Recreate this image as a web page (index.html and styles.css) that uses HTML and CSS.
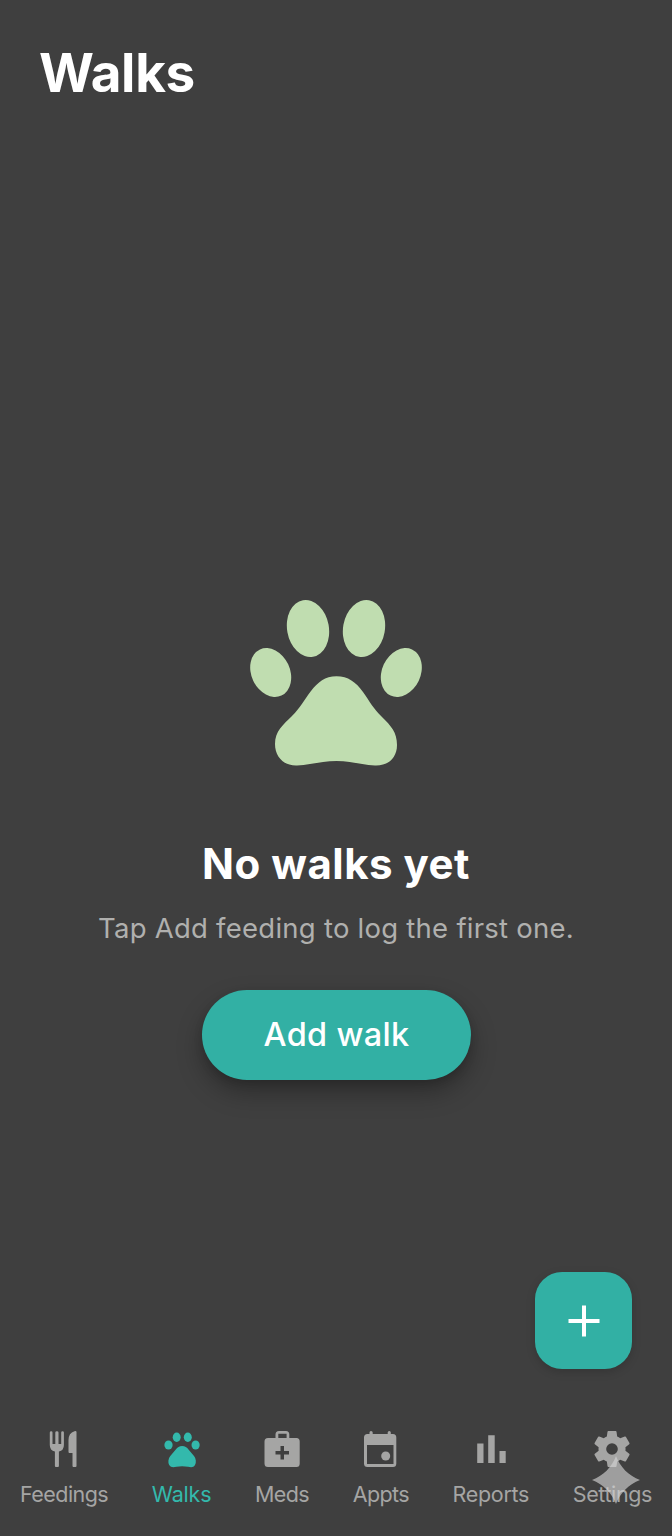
FILE: index.html
```html
<!DOCTYPE html>
<html lang="en">
<head>
<meta charset="utf-8">
<title>Walks</title>
<link rel="stylesheet" href="styles.css">
</head>
<body>
<div class="app">
  <header class="header"><h1 class="title">Walks</h1></header>
  <main class="empty">
    <svg class="paw" viewBox="0 0 172 168" aria-hidden="true">
      <ellipse cx="58" cy="29.500" rx="20.900" ry="28.800" transform="rotate(-10 58 29.500)"/>
      <ellipse cx="114" cy="29.500" rx="20.900" ry="28.800" transform="rotate(10 114 29.500)"/>
      <ellipse cx="20.700" cy="73.500" rx="19.300" ry="25.400" transform="rotate(-25 20.700 73.500)"/>
      <ellipse cx="151.300" cy="73.500" rx="19.300" ry="25.400" transform="rotate(25 151.300 73.500)"/>
      <path d="M86.500 77.200C98 77.200 106 83 113 93C120 103 123 109 132 118C141 127 147 133 147 146C147 159 138 167 125 166.500C112 166 101 162 86.500 162C72 162 60 166 47 166.500C34 167 25 158 25 145C25 132 33 126 42 117C51 108 54 101 61 92C68 83 75 77.200 86.500 77.200Z"/>
    </svg>
    <h2 class="empty-title">No walks yet</h2>
    <p class="empty-text">Tap Add feeding to log the first one.</p>
    <button class="add-button">Add walk</button>
  </main>
  <div class="fab-row">
    <button class="fab" aria-label="Add walk">
      <svg class="plus" viewBox="0 0 32 32"><path d="M16 0.500V31.500M0.500 16H31.500"/></svg>
    </button>
  </div>
  <nav class="tabs">
    <a class="tab">
      <svg class="icon" viewBox="0 0 44 44"><path d="M7.800 5.500Q7.800 4.200 9.200 4.200Q10.500 4.200 10.500 5.500V17H13.300V5.500Q13.300 4.200 14.900 4.200Q16.500 4.200 16.500 5.500V17H19.200V5.500Q19.200 4.200 20.500 4.200Q21.900 4.200 21.900 5.500V18Q21.900 23.500 16.900 24.600V39Q16.900 40 15.900 40H13.900Q12.900 40 12.900 39V24.600Q7.800 23.500 7.800 18ZM34.500 5V39Q34.500 40 33.500 40H31.500Q30.500 40 30.500 39V26H27.500Q26.500 26 26.500 25V13Q26.500 6 32.500 4.200Q34.500 3.800 34.500 5Z"/></svg>
      <span class="label label-feedings">Feedings</span>
    </a>
    <a class="tab tab-active">
      <svg class="icon" viewBox="0 0 44 44"><ellipse cx="16.700" cy="10.300" rx="4" ry="4.700"/><ellipse cx="27.800" cy="10.300" rx="4" ry="4.700"/><ellipse cx="8.500" cy="18" rx="4.100" ry="4.500"/><ellipse cx="35.600" cy="18" rx="4.100" ry="4.500"/><path d="M22.100 19C25 19 27 20.500 28.500 22.500L34 29C36 31.500 36.500 35.500 35 38C33.500 40.700 31 40.400 28 39.800C24 39.100 20 39.100 16.500 39.800C13.500 40.400 10.800 40.700 9.200 38C7.700 35.500 8.300 31.500 10.300 29L15.800 22.500C17.500 20.500 19.300 19 22.100 19Z"/></svg>
      <span class="label label-walks">Walks</span>
    </a>
    <a class="tab">
      <svg class="icon" viewBox="0 0 44 44"><path fill-rule="evenodd" d="M15.500 11V7.500Q15.500 4 19 4H26Q29.300 4 29.300 7.500V11H36.500Q39.700 11 39.700 14.500V36.500Q39.700 40 36.500 40H8Q4.500 40 4.500 36.500V14.500Q4.500 11 8 11ZM18.300 11H26.600V6.800H18.300ZM20.500 19V24H15.500V27.500H20.500V32.500H24V27.500H29V24H24V19Z"/></svg>
      <span class="label label-meds">Meds</span>
    </a>
    <a class="tab">
      <svg class="icon" viewBox="0 0 44 44"><path fill-rule="evenodd" d="M10.500 5.500Q10.500 4 12 4Q13.700 4 13.700 5.500V7H28.700V5.500Q28.700 4 30.300 4Q31.800 4 31.800 5.500V7H34Q37.300 7 37.300 10.500V36.500Q37.300 40 34 40H8.500Q5 40 5 36.500V10.500Q5 7 8.500 7H10.500ZM8 18V36.900H34.500V18Z"/><circle cx="26.700" cy="29" r="4.500"/></svg>
      <span class="label label-appts">Appts</span>
    </a>
    <a class="tab">
      <svg class="icon" viewBox="0 0 44 44"><path d="M8.200 16.500H14.500V36H8.200ZM19.200 8.200H25.700V36H19.200ZM30.500 24H36.700V36H30.500Z"/></svg>
      <span class="label label-reports">Reports</span>
    </a>
    <a class="tab tab-settings">
      <svg class="icon" viewBox="0.300 0.300 23.400 23.400"><path d="M19.140 12.940c.04-.3.06-.61.06-.94 0-.32-.02-.64-.07-.94l2.030-1.580a.49.49 0 0 0 .12-.61l-1.920-3.320a.49.49 0 0 0-.59-.22l-2.390.96a7 7 0 0 0-1.620-.94l-.36-2.540a.48.48 0 0 0-.48-.41h-3.840a.48.48 0 0 0-.47.41l-.36 2.540c-.59.24-1.130.57-1.620.94l-2.390-.96a.48.48 0 0 0-.59.22L2.740 8.870a.48.48 0 0 0 .12.61l2.030 1.580a6 6 0 0 0 0 1.880l-2.030 1.580a.49.49 0 0 0-.12.61l1.920 3.320c.12.22.37.29.59.22l2.390-.96c.5.38 1.030.7 1.620.94l.36 2.540c.05.24.24.41.48.41h3.840c.24 0 .44-.17.47-.41l.36-2.540a7 7 0 0 0 1.620-.94l2.390.96c.22.08.47 0 .59-.22l1.920-3.320a.48.48 0 0 0-.12-.61zM12 15.100a3.100 3.100 0 1 1 0-6.200 3.100 3.100 0 0 1 0 6.200z"/></svg>
      <span class="label label-settings">Settings</span>
      <svg class="sparkle" viewBox="0 0 48 48"><path d="M24 0C28 11 37 20 48 24C37 28 28 37 24 48C20 37 11 28 0 24C11 20 20 11 24 0Z"/></svg>
    </a>
  </nav>
</div>
</body>
</html>
```
FILE: styles.css
```css
* { box-sizing: border-box; }
body { margin: 0; background: #3f3f3f; font-family: Inter, sans-serif; }
.app { height: 1536px; display: flex; flex-direction: column; overflow: hidden; }
.header { padding: 41px 39px 0; height: 140px; }
.title { margin: 0; font-size: 53px; line-height: 65px; font-weight: 700; color: #fff; letter-spacing: -0.3px; }
.empty { flex: 1; padding-top: 459px; display: flex; flex-direction: column; align-items: center; }
.paw { display: block; width: 172px; height: 168px; fill: #c0ddb0; }
.empty-title { margin: 71px 0 0; font-size: 42px; line-height: 52px; font-weight: 700; color: #fff; white-space: nowrap; letter-spacing: .5px; }
.empty-text { margin: 20px 0 0; font-size: 27.500px; line-height: 36px; color: #b0b0ae; white-space: nowrap; letter-spacing: .25px; }
.add-button { margin: 44px 0 0 1px; width: 269px; height: 90px; padding: 0; border: 0; border-radius: 45px; background: #32b0a4; color: #fff; font: 550 32.500px/90px Inter, sans-serif; letter-spacing: .3px; box-shadow: 0 12px 26px rgba(0, 0, 0, .3), 0 4px 8px rgba(0, 0, 0, .12); }
.fab-row { display: flex; justify-content: flex-end; padding-right: 40px; }
.fab { width: 97px; height: 97px; padding: 0; border: 0; border-radius: 27px; background: #32b0a4; display: flex; align-items: center; justify-content: center; box-shadow: 0 3px 10px rgba(0, 0, 0, .16); }
.plus { width: 32px; height: 32px; fill: none; stroke: #fff; stroke-width: 4; }
.tabs { height: 167px; padding: 58px 20px 0; display: flex; justify-content: space-between; align-items: flex-start; }
.tab { position: relative; display: flex; flex-direction: column; align-items: center; color: #a5a5a4; }
.tab-active { color: #33b9ac; }
.icon { display: block; width: 44px; height: 44px; fill: currentColor; }
.label { margin-top: 10px; font-size: 21.500px; line-height: 26px; white-space: nowrap; }
.label-feedings { letter-spacing: -.55px; }
.label-walks { letter-spacing: -.2px; }
.label-meds { letter-spacing: -.6px; }
.label-appts { letter-spacing: -.65px; }
.label-reports { letter-spacing: -.3px; }
.label-settings { letter-spacing: -.4px; }
.sparkle { position: absolute; left: 19px; top: 29px; width: 48px; height: 48px; fill: #d2d2d2; opacity: .65; }
```
